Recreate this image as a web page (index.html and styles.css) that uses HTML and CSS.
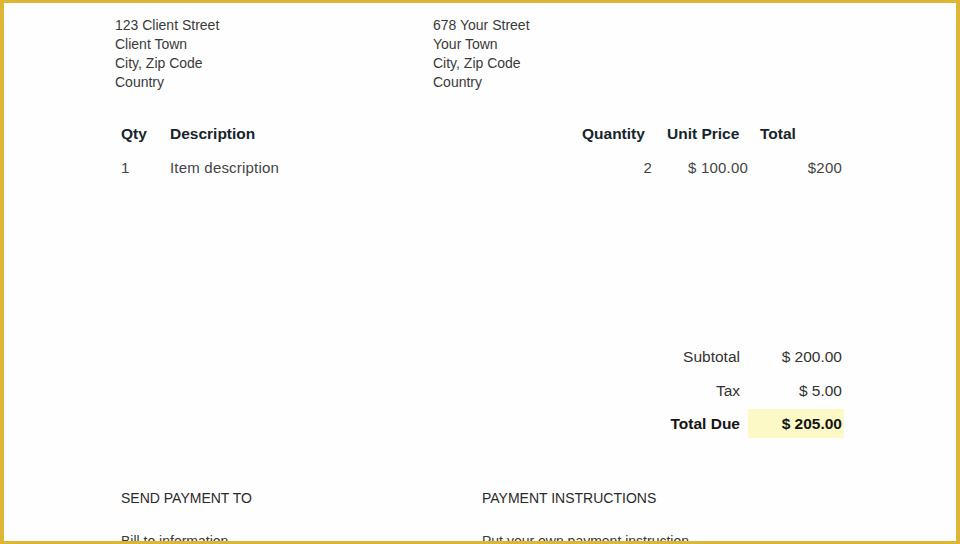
FILE: index.html
```html
<!DOCTYPE html>
<html lang="en">
<head>
    <meta charset="UTF-8">
    <meta name="viewport" content="width=device-width, initial-scale=1.0">
    <title>Invoice</title>
    <link rel="stylesheet" href="styles.css">
</head>
<body>
    <div class="invoice-frame">
        <section class="address-row">
            <div class="address-block">
                <p>123 Client Street</p>
                <p>Client Town</p>
                <p>City, Zip Code</p>
                <p>Country</p>
            </div>
            <div class="address-block">
                <p>678 Your Street</p>
                <p>Your Town</p>
                <p>City, Zip Code</p>
                <p>Country</p>
            </div>
        </section>

        <section class="items-table">
            <div class="cell head">Qty</div>
            <div class="cell head">Description</div>
            <div class="cell head">Quantity</div>
            <div class="cell head">Unit Price</div>
            <div class="cell head">Total</div>

            <div class="cell">1</div>
            <div class="cell">Item description</div>
            <div class="cell num qty">2</div>
            <div class="cell num">$ 100.00</div>
            <div class="cell num">$200</div>
        </section>

        <section class="totals">
            <div class="total-label">Subtotal</div>
            <div class="total-value">$ 200.00</div>
            <div class="total-label">Tax</div>
            <div class="total-value">$ 5.00</div>
            <div class="total-label due">Total Due</div>
            <div class="total-value due">$ 205.00</div>
        </section>

        <footer class="payment-row">
            <div class="payment-block">
                <h2 class="payment-title">Send Payment To</h2>
                <p>Bill to information</p>
            </div>
            <div class="payment-block">
                <h2 class="payment-title">Payment Instructions</h2>
                <p>Put your own payment instruction</p>
            </div>
        </footer>
    </div>
</body>
</html>
```

FILE: styles.css
```css
:root {
    --frame-gold: #dcb634;
    --text-body: #3a3a3a; --text-head: #17242c; --text-strong: #151515;
    --due-highlight: #fcf9c6;
    --font-body: 'Liberation Sans', Arial, sans-serif;
}
* { margin: 0; padding: 0; box-sizing: border-box; }
body { font-family: var(--font-body); background-color: #fff; color: var(--text-body); }
.invoice-frame { /* page sheet with the gold edge */
    width: 960px; height: 544px; overflow: hidden; background-color: #fefefe;
    border: 4px solid var(--frame-gold); border-top-width: 3px; border-bottom-width: 3px;
    padding: 13px 0 0 111px;
}

/* Addresses */
.address-row { display: flex; }
.address-block { width: 318px; font-size: 14px; line-height: 19px; }

/* Line items */
.items-table {
    display: grid; grid-template-columns: 49px 412px 85px 93px 94px;
    margin-top: 25px; width: 733px;
}
.cell { padding: 0 6px; font-size: 15px; line-height: 34px; color: #444; white-space: nowrap; letter-spacing: 0.2px; }
.cell.head { font-size: 15.5px; font-weight: 700; color: var(--text-head); letter-spacing: 0; }
.cell.num { text-align: right; }
.cell.qty { padding-right: 9px; }

/* Totals */
.totals {
    display: grid; grid-template-columns: auto 96px; row-gap: 4.5px;
    width: 729px; margin-top: 157px; justify-content: end;
}
.total-label, .total-value { font-size: 15.5px; line-height: 29px; text-align: right; color: #333; }
.total-label { padding: 0 8px 0 6px; }
.total-value { padding: 0 2px 0 6px; }
.total-label.due, .total-value.due { font-weight: 700; color: var(--text-strong); }
.total-value.due { background-color: var(--due-highlight); }

/* Payment info */
.payment-row { display: flex; margin-top: 51px; padding-left: 6px; }
.payment-block { width: 361px; font-size: 14px; line-height: 19px; }
.payment-title { font-size: 14px; font-weight: 400; text-transform: uppercase; line-height: 19px; margin-bottom: 24px; color: #2a2a2a; }
```
